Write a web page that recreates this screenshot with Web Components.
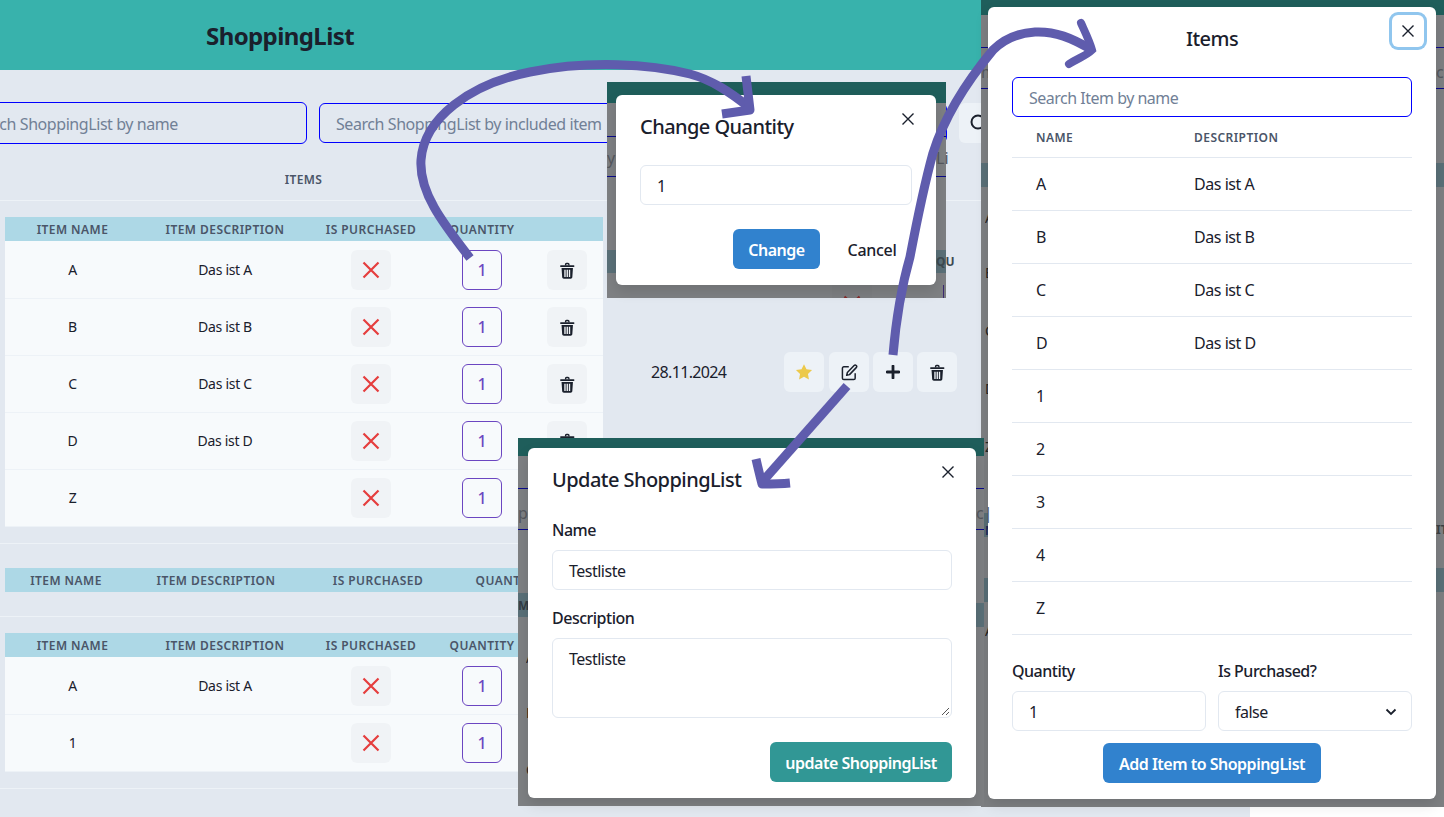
<!DOCTYPE html>
<html lang="en"><head><meta charset="utf-8"><title>ShoppingList</title>
<style>
html,body{margin:0;padding:0;width:1444px;height:817px;overflow:hidden;background:#fff}
body{position:relative;font-family:"Noto Sans","Open Sans",sans-serif;color:#1a202c;font-size:16px}
</style></head><body>
<app-canvas>
  <shop-page>
    <shop-header slot="head">ShoppingList</shop-header>
    <search-row slot="search"></search-row>
    <list-section style="--pt:16px;--pb:16px">
      <item-table style="--cols:135px 170px 122px 100px 70px">
        <item-row name="A" desc="Das ist A"></item-row>
        <item-row name="B" desc="Das ist B"></item-row>
        <item-row name="C" desc="Das ist C"></item-row>
        <item-row name="D" desc="Das ist D"></item-row>
        <item-row name="Z" desc=""></item-row>
      </item-table>
      <list-meta slot="meta">28.11.2024</list-meta>
    </list-section>
    <list-section style="--pt:24px;--pb:24px">
      <item-table style="--cols:122px 178px 146px 114px 38px"></item-table>
    </list-section>
    <list-section style="--pt:16px;--pb:16px">
      <item-table style="--cols:135px 170px 122px 100px 70px">
        <item-row name="A" desc="Das ist A"></item-row>
        <item-row name="1" desc=""></item-row>
      </item-table>
    </list-section>
  </shop-page>

  <dim-shot style="--l:607px;--t:82px;--w:339px;--h:216px;--pad:13px 10px 13px 9px;--z:2">
    <dim-frag style="--x:0;--y:0;--w:339px;--h:21px;--c:#1f5e5b"></dim-frag>
    <dim-frag style="--x:0;--y:54px;--w:339px;--h:1px;--c:#0a0a8a"></dim-frag>
    <dim-frag style="--x:0;--y:94px;--w:339px;--h:1px;--c:#0a0a8a"></dim-frag>
    <dim-frag style="--x:0;--y:168px;--w:339px;--h:23px;--c:#5a7078"></dim-frag>
    <dim-frag style="--x:0;--y:64px;--fg:#55585e;--fs:16px">y</dim-frag>
    <dim-frag style="--x:329px;--y:64px;--fg:#55585e;--fs:16px">Li</dim-frag>
    <dim-frag style="--x:329px;--y:168px;--fg:#3c4a50;--fs:12px;--fw:700">QU</dim-frag>
    <dim-frag style="--x:225px;--y:203px;--w:40px;--h:13px;--c:#7c7e81"></dim-frag>
    <dim-frag style="--x:336px;--y:203px;--w:3px;--h:13px;--c:#7c7e81"></dim-frag>
    <dim-frag style="--x:336px;--y:203px;--w:1px;--h:13px;--c:#3c2a70"></dim-frag>
    <dim-frag style="--x:236px;--y:213px;--w:18px;--h:3px"><svg width="18" height="18" viewBox="0 0 18 18" fill="none" stroke="#862a2a" stroke-width="2.200" style="display:block"><path d="M1.500 1.500l15 15M16.500 1.500l-15 15"/></svg></dim-frag>
    <app-modal heading="Change Quantity" style="--mw:320px">
      <field-box>1</field-box>
      <modal-actions slot="footer">
        <solid-button style="--bg:#3182ce;--bw:87px">Change</solid-button>
        <ghost-button>Cancel</ghost-button>
      </modal-actions>
    </app-modal>
  </dim-shot>

  <dim-shot style="--l:981px;--t:0px;--w:463px;--h:807px;--pad:7px 8px 8px 7px;--z:3">
    <dim-frag style="--x:0;--y:0;--w:463px;--h:15px;--c:#1f5e5b"></dim-frag>
    <dim-frag style="--x:0;--y:47px;--w:463px;--h:1px;--c:#0a0a8a"></dim-frag>
    <dim-frag style="--x:0;--y:88px;--w:463px;--h:1px;--c:#0a0a8a"></dim-frag>
    <dim-frag style="--x:0;--y:163px;--w:463px;--h:24px;--c:#5a7078"></dim-frag>
    <dim-frag style="--x:3px;--y:513px;--w:4px;--h:24px;--c:#5a7078"></dim-frag>
    <dim-frag style="--x:455px;--y:568px;--w:8px;--h:24px;--c:#5a7078"></dim-frag>
    <dim-frag style="--x:3px;--y:578px;--w:4px;--h:24px;--c:#5a7078"></dim-frag>
    <dim-frag style="--x:0;--y:60px;--fg:#55585e;--fs:16px">m</dim-frag>
    <dim-frag style="--x:455px;--y:60px;--fg:#55585e;--fs:16px">cl</dim-frag>
    <dim-frag style="--x:455px;--y:518px;--fg:#3c4044;--fs:12px;--fw:700">IT</dim-frag>
    <dim-frag style="--x:4px;--y:206px;--fg:#222;--fs:14px">A</dim-frag>
    <dim-frag style="--x:4px;--y:261px;--fg:#222;--fs:14px">B</dim-frag>
    <dim-frag style="--x:4px;--y:319px;--fg:#222;--fs:14px">C</dim-frag>
    <dim-frag style="--x:4px;--y:377px;--fg:#222;--fs:14px">D</dim-frag>
    <dim-frag style="--x:4px;--y:435px;--fg:#222;--fs:14px">Z</dim-frag>
    <dim-frag style="--x:4px;--y:519px;--fg:#1e2a5a;--fs:12px;--fw:700">N</dim-frag>
    <dim-frag style="--x:4px;--y:619px;--fg:#222;--fs:14px">A</dim-frag>
    <app-modal heading="Items" centered nofoot style="--mw:448px">
      <close-focus slot="close"></close-focus>
      <field-box style="--bc:#0000ff;--fg:#718096">Search Item by name</field-box>
      <pick-table>
        <pick-row name="A" desc="Das ist A"></pick-row>
        <pick-row name="B" desc="Das ist B"></pick-row>
        <pick-row name="C" desc="Das ist C"></pick-row>
        <pick-row name="D" desc="Das ist D"></pick-row>
        <pick-row name="1" desc=""></pick-row>
        <pick-row name="2" desc=""></pick-row>
        <pick-row name="3" desc=""></pick-row>
        <pick-row name="4" desc=""></pick-row>
        <pick-row name="Z" desc=""></pick-row>
      </pick-table>
      <add-form></add-form>
    </app-modal>
  </dim-shot>

  <dim-shot style="--l:518px;--t:438px;--w:466px;--h:368px;--pad:10px 8px 8px 10px;--z:4">
    <dim-frag style="--x:0;--y:0;--w:466px;--h:18px;--c:#1f5e5b"></dim-frag>
    <dim-frag style="--x:0;--y:50px;--w:466px;--h:1px;--c:#0a0a8a"></dim-frag>
    <dim-frag style="--x:0;--y:91px;--w:466px;--h:1px;--c:#0a0a8a"></dim-frag>
    <dim-frag style="--x:0;--y:155px;--w:10px;--h:24px;--c:#5a7078"></dim-frag>
    <dim-frag style="--x:458px;--y:165px;--w:8px;--h:24px;--c:#5a7078"></dim-frag>
    <dim-frag style="--x:0;--y:63px;--fg:#55585e;--fs:16px">pi</dim-frag>
    <dim-frag style="--x:458px;--y:63px;--fg:#55585e;--fs:16px">c|</dim-frag>
    <dim-frag style="--x:0;--y:156px;--fg:#333c44;--fs:12px;--fw:700">M</dim-frag>
    <dim-frag style="--x:8px;--y:208px;--fg:#222;--fs:14px">A</dim-frag>
    <dim-frag style="--x:8px;--y:263px;--fg:#2a1a10;--fs:14px">B</dim-frag>
    <dim-frag style="--x:8px;--y:320px;--fg:#222;--fs:14px">C</dim-frag>
    <app-modal heading="Update ShoppingList" style="--mw:448px">
      <field-label>Name</field-label>
      <field-box>Testliste</field-box>
      <field-label style="--mt:16px">Description</field-label>
      <field-box multiline>Testliste</field-box>
      <modal-actions slot="footer">
        <solid-button style="--bg:#319795;--bw:182px">update ShoppingList</solid-button>
      </modal-actions>
    </app-modal>
  </dim-shot>

  <flow-arrows></flow-arrows>
</app-canvas>

<script>
const ICON = {
  x:'<svg width="18" height="18" viewBox="0 0 18 18" fill="none" stroke="#e53e3e" stroke-width="2.2"><path d="M1.5 1.5l15 15M16.5 1.5l-15 15"/></svg>',
  close:'<svg width="12" height="12" viewBox="0 0 12 12" fill="none" stroke="#1a202c" stroke-width="1.4"><path d="M.5.5l11 11M11.5.5l-11 11"/></svg>',
  trash:'<svg width="16.5" height="17" viewBox="0 0 24 24" preserveAspectRatio="none" fill="#1a202c"><path d="M8.6 5V3.6C8.6 2.3 9.6 1.2 11 1.2h2c1.4 0 2.4 1.1 2.4 2.4V5h-1.9V3.8c0-.4-.3-.7-.7-.7h-1.6c-.4 0-.7.3-.7.7V5z"/><rect x="1.6" y="4.6" width="20.8" height="2.5" rx="1"/><path fill-rule="evenodd" d="M3.7 8.6h16.600l-.9 12.600c-.1 1.500-1.100 2.400-2.500 2.400H7.100c-1.400 0-2.400-.9-2.500-2.400zM7.700 11v10h2V11zM11 11v10h2V11zM14.300 11v10h2V11z"/></svg>',
  star:'<svg width="18" height="18" viewBox="0 0 24 24" fill="#ecc94b"><path d="M12 1.500l3.300 6.800 7.400 1-5.400 5.200 1.300 7.400-6.600-3.500-6.600 3.500 1.300-7.400L1.300 9.300l7.400-1z"/></svg>',
  edit:'<svg width="17" height="17" viewBox="0 0 24 24" fill="none" stroke="#1a202c" stroke-width="2.100" stroke-linejoin="round"><path d="M11 4H4a2 2 0 0 0-2 2v14a2 2 0 0 0 2 2h14a2 2 0 0 0 2-2v-7"/><path d="M18.500 2.100a2.100 2.100 0 0 1 3 3L12 15l-4 1 1-4z"/></svg>',
  plus:'<svg width="14" height="14" viewBox="0 0 14 14" fill="none" stroke="#1a202c" stroke-width="2.800" stroke-linecap="round"><path d="M7 1v12M1 7h12"/></svg>',
  search:'<svg width="20" height="20" viewBox="0 0 20 20" fill="none" stroke="#1a202c" stroke-width="2"><circle cx="9" cy="9" r="6.500"/><path d="M14 14l5 5"/></svg>',
  chev:'<svg width="12" height="8" viewBox="0 0 12 8" fill="none" stroke="#1a202c" stroke-width="1.800"><path d="M1.500 1.500L6 6l4.500-4.500"/></svg>',
  grip:'<svg width="9" height="9" viewBox="0 0 9 9" stroke="#555" stroke-width="1" fill="none"><path d="M1 8l7-7M5 8l3-3"/></svg>'
};
function def(name, render){
  customElements.define(name, class extends HTMLElement{
    constructor(){super();this.attachShadow({mode:'open'});}
    connectedCallback(){this.shadowRoot.innerHTML=render(this);}
  });
}
const T=s=>String(s).replace(/&/g,'&amp;').replace(/</g,'&lt;');

def('app-canvas',()=>`<style>:host{display:block;position:relative;width:1444px;height:817px;overflow:hidden}</style><slot></slot>`);

def('shop-page',()=>`<style>
:host{display:flex;flex-direction:column;width:1250px;height:817px;background:#e2e8f0;overflow:hidden}
.cols{display:flex;align-items:center;height:40px;padding-top:16px;border-bottom:1px solid #edf2f7;flex:none}
.cols span{width:607px;text-align:center;font:600 12px/16px "Noto Sans",sans-serif;letter-spacing:.4px;color:#4a5568;text-transform:uppercase}
</style><slot name="head"></slot><slot name="search"></slot><div class="cols"><span>Items</span></div><slot></slot>`);

def('shop-header',()=>`<style>
:host{display:flex;align-items:center;box-sizing:border-box;height:70px;padding-top:2px;background:#38b2ac;flex:none}
b{display:block;width:560px;text-align:center;font:700 24px/32px "Noto Sans",sans-serif;letter-spacing:-.6px;color:#1a202c}
</style><b><slot></slot></b>`);

def('search-row',()=>`<style>
:host{display:flex;align-items:center;gap:12px;padding-top:32px;height:42px;flex:none;margin-left:-49px}
.i{box-sizing:border-box;display:flex;align-items:center;padding:2px 16px 0;border:1px solid #0000ff;border-radius:6px;color:#718096;font:16px/24px "Noto Sans",sans-serif;letter-spacing:-.43px;white-space:nowrap;overflow:hidden;flex:none}
.a{width:356px;height:42px}.b{width:628px;height:40px}
.s{width:40px;height:40px;border-radius:6px;background:#edf2f7;display:flex;align-items:center;justify-content:center;flex:none}
</style><div class="i a">Search ShoppingList by name</div><div class="i b">Search ShoppingList by included item</div><div class="s">${ICON.search}</div>`);

def('list-section',()=>`<style>
:host{display:grid;grid-template-columns:603px 1fr;border-bottom:1px solid #edf2f7;flex:none;padding-top:var(--pt);padding-bottom:var(--pb)}
.l{padding-left:5px}.m{display:flex;align-items:center}
</style><div class="l"><slot></slot></div><div class="m"><slot name="meta"></slot></div>`);

def('item-table',()=>`<style>
:host{display:block;width:598px}
.h{display:grid;grid-template-columns:var(--cols);box-sizing:border-box;height:24px;padding-top:1px;background:#add8e6;align-items:center}
.h span{text-align:center;white-space:nowrap;font:600 12px/16px "Noto Sans",sans-serif;letter-spacing:.45px;color:#4a5568}
::slotted(item-row:first-child){height:58px;padding-top:9px}
</style><div class="h"><span>ITEM NAME</span><span>ITEM DESCRIPTION</span><span>IS PURCHASED</span><span>QUANTITY</span><span></span></div><slot></slot>`);

def('item-row',e=>`<style>
:host{display:grid;grid-template-columns:var(--cols);box-sizing:border-box;height:57px;padding:8px 0 8px;background:#f7fafc;border-bottom:1px solid #edf2f7;align-items:center;justify-items:center;font:14px/20px "Noto Sans",sans-serif;letter-spacing:-.3px;color:#1a202c}
.b{width:40px;height:40px;border-radius:6px;background:#f0f3f6;display:flex;align-items:center;justify-content:center}
.q{box-sizing:border-box;width:40px;height:40px;border-radius:6px;border:1px solid #6b46c1;color:#6b46c1;display:flex;align-items:center;justify-content:center;font:500 16px/20px "Noto Sans",sans-serif}
</style><span>${T(e.getAttribute('name'))}</span><span>${T(e.getAttribute('desc'))}</span><div class="b">${ICON.x}</div><div class="q">1</div><div class="b">${ICON.trash}</div>`);

def('list-meta',()=>`<style>
:host{display:flex;align-items:center;margin-left:48px}
span{width:133px;font:16px/24px "Noto Sans",sans-serif;letter-spacing:-.65px;color:#1a202c}
.g{display:flex}
.b{width:40px;height:40px;border-radius:6px;background:#edf2f7;display:flex;align-items:center;justify-content:center}
</style><span><slot></slot></span><div class="g"><div class="b">${ICON.star}</div><div class="b" style="margin-left:5px">${ICON.edit}</div><div class="b" style="margin-left:4px">${ICON.plus}</div><div class="b" style="margin-left:4px">${ICON.trash}</div></div>`);

def('dim-shot',()=>`<style>
:host{display:block;position:absolute;box-sizing:border-box;left:var(--l);top:var(--t);width:var(--w);height:var(--h);padding:var(--pad);z-index:var(--z);background:#7e8083}
</style><slot></slot>`);

def('dim-frag',()=>`<style>
:host{position:absolute;left:var(--x);top:var(--y);width:var(--w);height:var(--h);background:var(--c);color:var(--fg);font:var(--fw,400) var(--fs,14px)/24px "Noto Sans",sans-serif;white-space:nowrap;overflow:hidden}
</style><slot></slot>`);

def('app-modal',e=>`<style>
:host{display:block;position:relative;box-sizing:border-box;width:var(--mw);background:#fff;border-radius:6px;box-shadow:0 6px 14px rgba(0,0,0,.12);color:#1a202c;font:16px/24px "Noto Sans",sans-serif}
h2{margin:0;padding:17px 24px 15px;font:500 20px/30px "Noto Sans",sans-serif;letter-spacing:-.55px;color:#1a202c;${e.hasAttribute('centered')?'text-align:center;':''}}
.x{position:absolute;top:8px;right:12px;width:32px;height:32px;display:flex;align-items:center;justify-content:center}
.body{padding:8px 24px}.foot{padding:16px 24px}
</style><h2>${T(e.getAttribute('heading'))}</h2><div class="x"><slot name="close">${ICON.close}</slot></div><div class="body"><slot></slot></div>${e.hasAttribute('nofoot')?'':'<div class="foot"><slot name="footer"></slot></div>'}`);

def('close-focus',()=>`<style>
:host{box-sizing:border-box;width:32px;height:32px;display:flex;align-items:center;justify-content:center;border-radius:6px;box-shadow:0 0 0 3px #90c6ee}
</style>${ICON.close}`);

def('field-box',e=>{const m=e.hasAttribute('multiline');return `<style>
:host{box-sizing:border-box;display:${m?'block':'flex'};align-items:center;height:${m?'80px':'40px'};padding:${m?'8px 16px':'2px 16px 0'};border:1px solid var(--bc,#e2e8f0);border-radius:6px;color:var(--fg,#1a202c);position:relative;font:16px/24px "Noto Sans",sans-serif;letter-spacing:-.5px;background:#fff}
.g{position:absolute;right:1px;bottom:1px;line-height:0}
</style><slot></slot>${m?`<span class="g">${ICON.grip}</span>`:''}`});

def('field-label',()=>`<style>
:host{display:block;margin-top:var(--mt,0);margin-bottom:8px;font:500 16px/24px "Noto Sans",sans-serif;letter-spacing:-.5px;color:#1a202c}
</style><slot></slot>`);

def('modal-actions',()=>`<style>:host{display:flex;justify-content:flex-end}</style><slot></slot>`);

def('solid-button',()=>`<style>
:host{box-sizing:border-box;display:flex;align-items:center;justify-content:center;height:40px;padding-top:1px;width:var(--bw);background:var(--bg);border-radius:6px;color:#fff;font:600 16px/24px "Noto Sans",sans-serif;letter-spacing:-.5px;white-space:nowrap}
</style><slot></slot>`);

def('ghost-button',()=>`<style>
:host{box-sizing:border-box;display:flex;align-items:center;justify-content:center;height:40px;padding-top:1px;width:80px;margin-left:12px;font:500 16px/24px "Noto Sans",sans-serif;letter-spacing:-.3px;color:#1a202c}
</style><slot></slot>`);

def('pick-table',()=>`<style>
:host{display:block}
.h{display:grid;grid-template-columns:158px 1fr;box-sizing:border-box;padding:1px 0 0 24px;height:41px;align-items:center;border-bottom:1px solid #e2e8f0;font:600 12px/16px "Noto Sans",sans-serif;letter-spacing:.45px;color:#4a5568}
</style><div class="h"><span>NAME</span><span>DESCRIPTION</span></div><slot></slot>`);

def('pick-row',e=>`<style>
:host{display:grid;grid-template-columns:158px 1fr;box-sizing:border-box;padding-left:24px;height:53px;align-items:center;border-bottom:1px solid #e2e8f0;font:16px/24px "Noto Sans",sans-serif;letter-spacing:-.45px}
</style><span>${T(e.getAttribute('name'))}</span><span>${T(e.getAttribute('desc'))}</span>`);

def('add-form',()=>`<style>
:host{display:block;margin-top:24px;margin-bottom:8px}
.g{display:grid;grid-template-columns:1fr 1fr;gap:12px}
.b{display:flex;justify-content:center;margin-top:12px}
</style><div class="g">
<div><field-label>Quantity</field-label><field-box>1</field-box></div>
<div><field-label>Is Purchased?</field-label><field-box><span>false</span><span style="margin-left:auto;margin-right:-2px;line-height:0">${ICON.chev}</span></field-box></div>
</div><div class="b"><solid-button style="--bg:#3182ce;--bw:218px">Add Item to ShoppingList</solid-button></div>`);

def('flow-arrows',()=>`<style>
:host{position:absolute;left:0;top:0;width:1444px;height:817px;z-index:9;pointer-events:none}
svg{display:block}
</style><svg width="1444" height="817" viewBox="0 0 1444 817" fill="none" stroke="#5f5cad" stroke-width="9">
<path d="M470 258C442 222 419 192 421 160C424 118 470 84 530 72C590 60 650 64 690 74C712 80 730 92 750 108"/>
<path d="M746 76L750 110L722 114" stroke-linejoin="round"/>
<path d="M893 355C896 320 902 285 910 257C918 215 925 182 933 153C945 115 968 80 993 50C1005 38 1018 33 1035 32C1055 31 1072 38 1092 50"/>
<path d="M1081 23C1086 34 1090 42 1092 50C1086 56 1078 58 1069 64" stroke-width="8" stroke-linecap="round"/>
<path d="M847 386L763 481"/>
<path d="M756 459C758 468 760 476 762 484C772 484 780 484 790 483" stroke-linejoin="round"/>
</svg>`);
</script>
</body></html>
